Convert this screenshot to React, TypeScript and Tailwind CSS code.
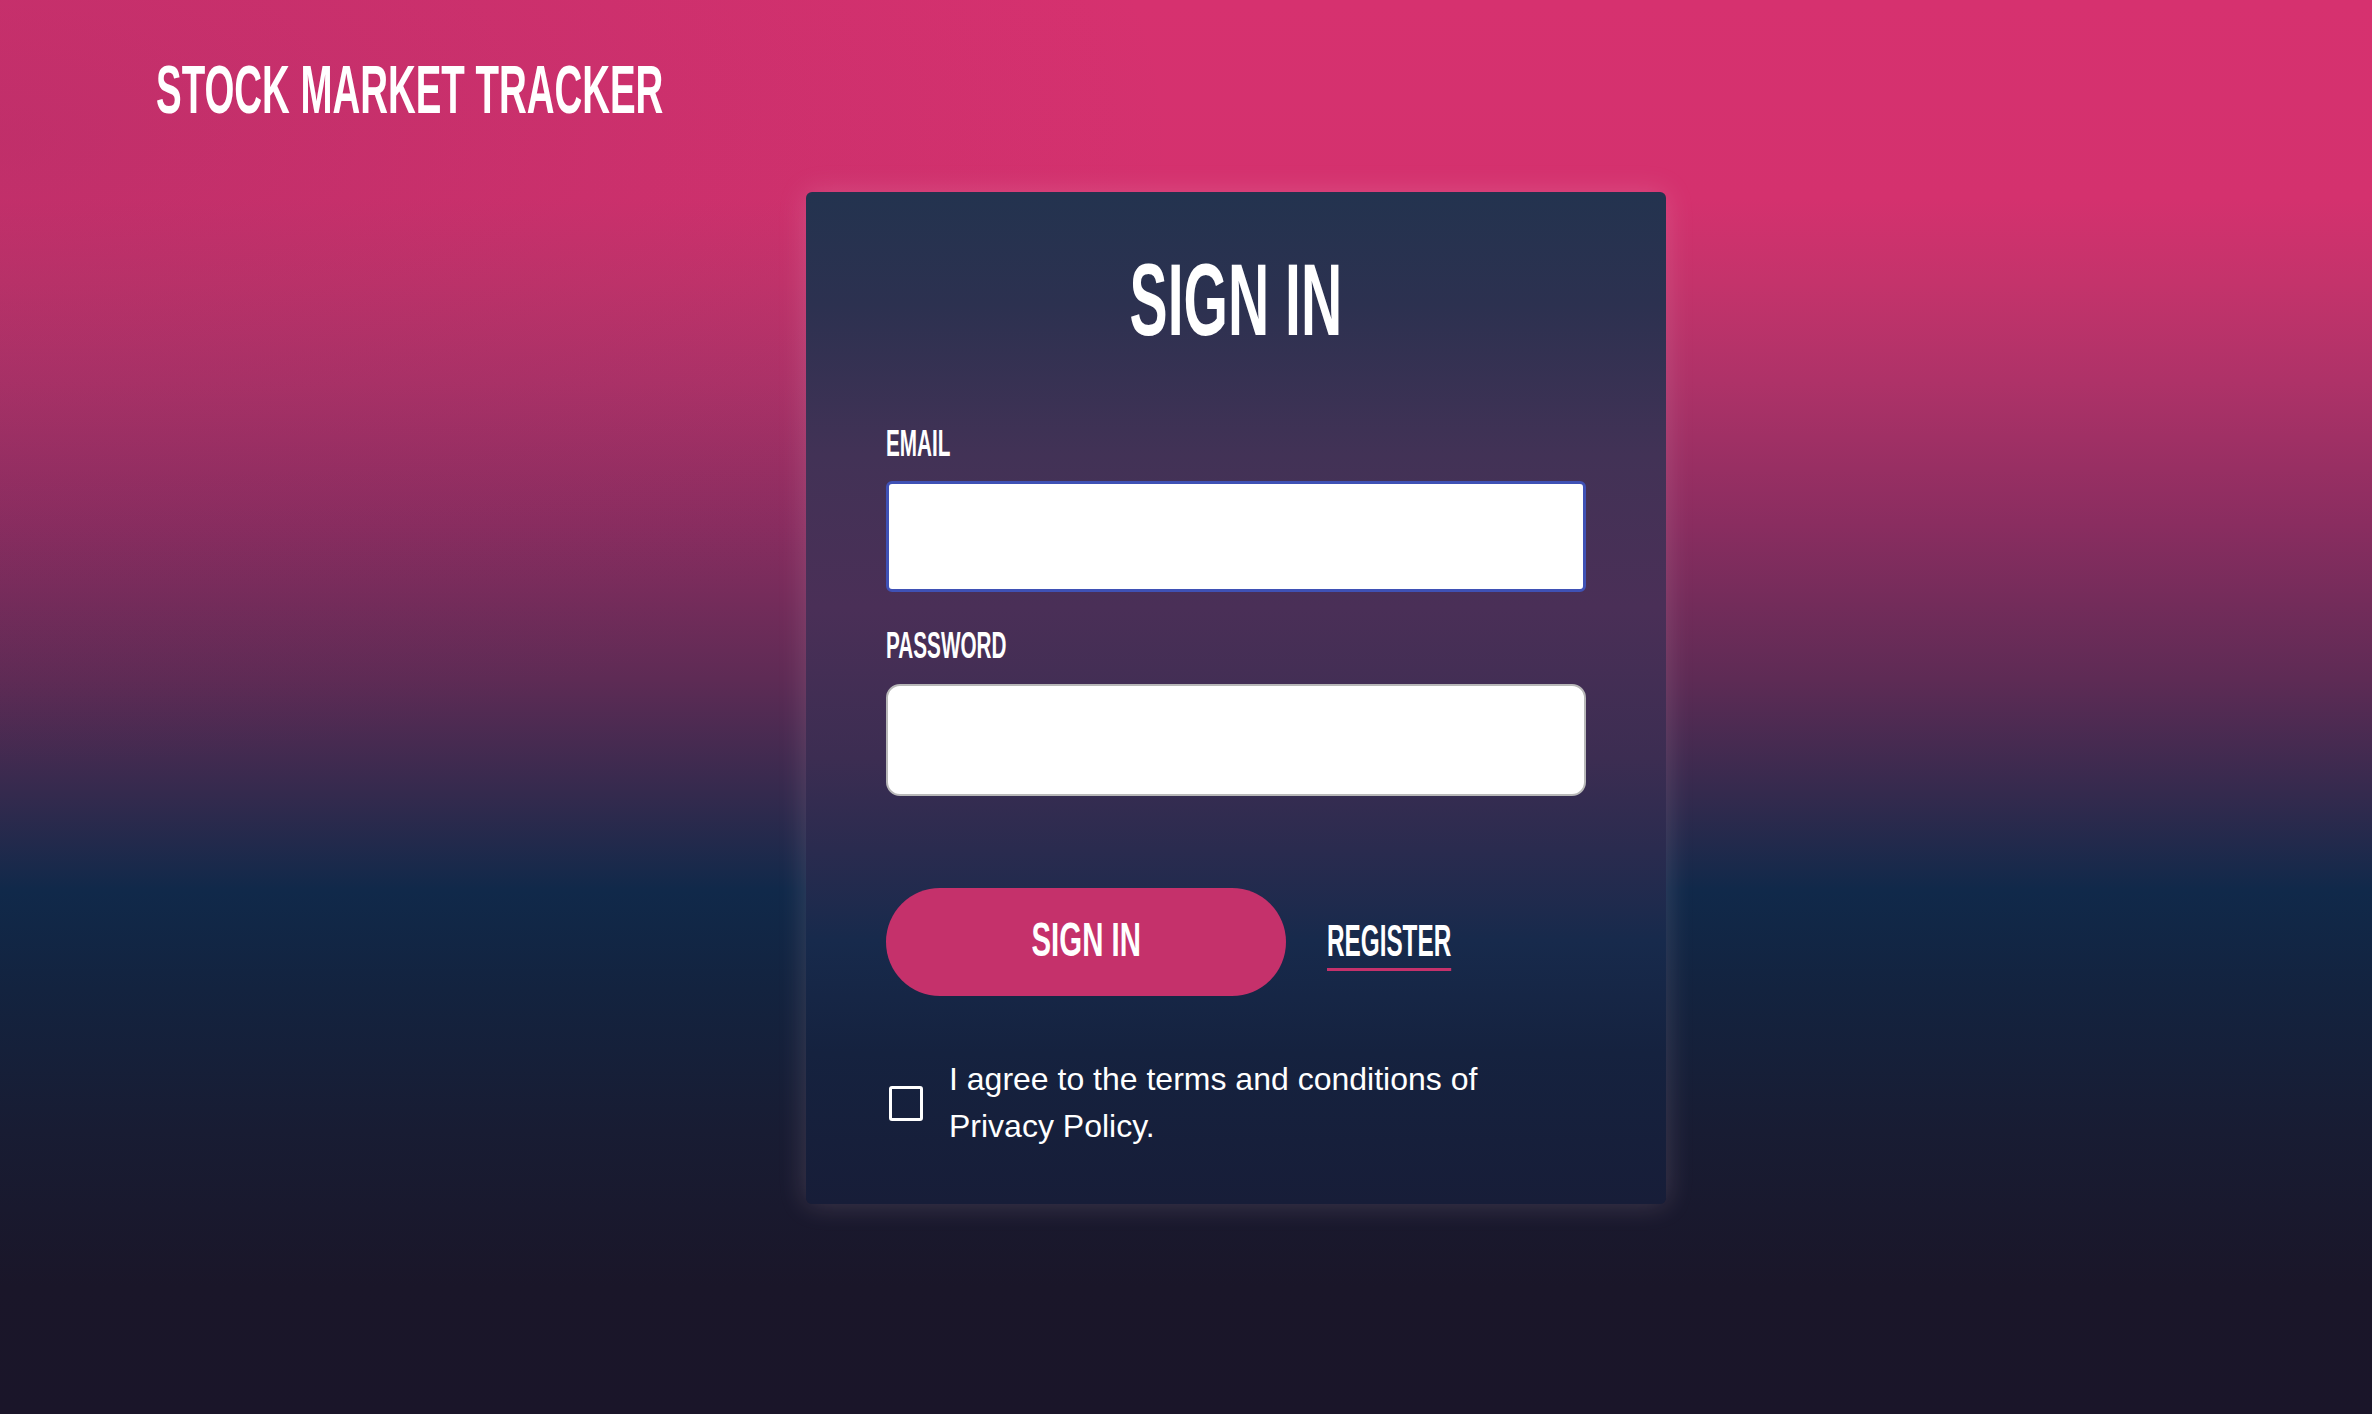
import { useState } from 'react'

const display = "font-['Liberation_Sans',Arial,sans-serif] font-bold uppercase text-white leading-none"
const squeeze = 'inline-block scale-x-[0.56] whitespace-nowrap'

const Label = ({ children }: { children: string }) => (
  <label className={`${display} block text-[37px] h-[37px]`}>
    <span className={`${squeeze} origin-left`}>{children}</span>
  </label>
)

const App = () => {
  const [agree, setAgree] = useState(false)

  return (
    <div className="min-h-[1414px] w-full bg-[radial-gradient(ellipse_at_0%_10%,rgba(120,40,90,0.22)_0%,rgba(120,40,90,0)_35%),linear-gradient(180deg,#d6316f_0%,#d4316e_14%,#c4336b_20%,#ae3268_27%,#8a2d60_37%,#5e2b55_48%,#352a4e_56%,#10294a_63%,#13233f_70%,#181c33_80%,#1a1629_91%,#1a1529_100%)]">
      {/* Header */}
      <header className="pl-[156px] pt-[55px]">
        <h1 className={`${display} text-[68px] h-[68px]`}>
          <span className="inline-block scale-x-[0.565] origin-left whitespace-nowrap">Stock Market Tracker</span>
        </h1>
      </header>

      {/* Sign in card */}
      <div className="flex justify-center pl-[100px] pt-[69px]">
        <div className="w-[860px] rounded-[6px] px-[80px] pt-[57px] pb-[54px] bg-[linear-gradient(180deg,#23334f_0%,#2c3150_11%,#423256_26%,#4a2f57_41%,#3c2d52_56%,#2a2b4f_65%,#172a4c_74%,#15223f_85%,#171d38_100%)] shadow-[0_0_28px_rgba(255,210,230,0.18)]">
          <h2 className={`${display} text-[102px] h-[102px] text-center`}>
            <span className={`${squeeze} origin-center`}>Sign In</span>
          </h2>

          <form className="mt-[74px]" onSubmit={(e) => e.preventDefault()}>
            <Label>Email</Label>
            <input
              type="email"
              className="mt-[19px] block w-[700px] h-[111px] rounded-[6px] border-[3px] border-[#3f51b5] bg-white px-4 text-[30px] outline-none"
            />

            <div className="mt-[35px]">
              <Label>Password</Label>
            </div>
            <input
              type="password"
              className="mt-[20px] block w-[700px] h-[112px] rounded-[14px] border-2 border-[#b8b8b8] bg-white px-4 text-[30px] outline-none"
            />

            <div className="mt-[92px] flex items-center gap-[41px]">
              <button
                type="submit"
                className={`${display} w-[400px] h-[108px] rounded-full bg-[#c5316b] text-[49px] pb-[5px]`}
              >
                <span className="inline-block scale-x-[0.6] origin-center whitespace-nowrap">Sign In</span>
              </button>
              <a href="#" className={`${display} text-[45px] mt-[4px]`}>
                <span className="inline-block scale-x-[0.54] origin-left whitespace-nowrap pb-[5px] border-b-[3px] border-[#c5316b]">Register</span>
              </a>
            </div>

            <div className="mt-[60px] flex items-center gap-[26px]">
              <button
                type="button"
                onClick={() => setAgree(!agree)}
                className="ml-[3px] w-[34px] h-[35px] shrink-0 rounded-[3px] border-[3px] border-white flex items-center justify-center text-white text-[24px]"
              >
                {agree ? '✓' : ''}
              </button>
              <p className="max-w-[600px] font-['Liberation_Sans',Arial,sans-serif] text-[32px] leading-[47px] text-white">
                I agree to the terms and conditions of Privacy Policy.
              </p>
            </div>
          </form>
        </div>
      </div>
    </div>
  )
}

export default App
